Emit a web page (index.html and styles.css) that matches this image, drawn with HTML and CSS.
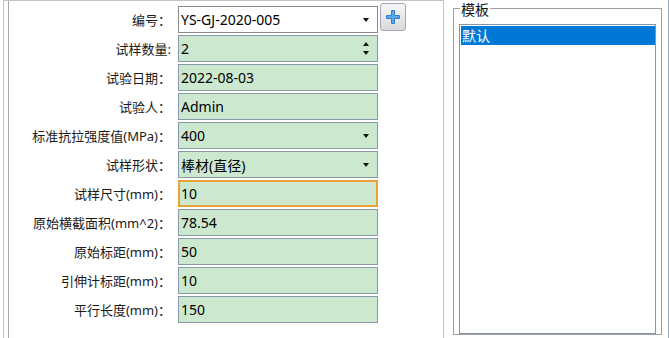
FILE: index.html
```html
<!DOCTYPE html>
<html lang="zh-CN">
<head>
    <meta charset="UTF-8">
    <meta name="viewport" content="width=device-width, initial-scale=1.0">
    <title>试样信息</title>
    <link rel="stylesheet" href="styles.css">
</head>
<body>
    <div class="window">
        <div class="left-panel">
            <div class="form-group">
                <div class="form">
                    <label class="label">编号：</label>
                    <div class="field combo plain"><span>YS-GJ-2020-005</span><span class="arrow-down"></span></div>
                    <button class="add-btn" title="新增">
                        <svg width="14" height="14" viewBox="0 0 14 14">
                            <path d="M5.5 0.5h3v5h5v3h-5v5h-3v-5h-5v-3h5z" fill="#5aa8ea" stroke="#2f7fcc" stroke-width="1"/>
                        </svg>
                    </button>

                    <label class="label">试样数量:</label>
                    <div class="field spin"><span>2</span><span class="spinner"><i class="arrow-up"></i><i class="arrow-down"></i></span></div>

                    <label class="label">试验日期：</label>
                    <div class="field"><span>2022-08-03</span></div>

                    <label class="label">试验人：</label>
                    <div class="field"><span>Admin</span></div>

                    <label class="label">标准抗拉强度值(MPa)：</label>
                    <div class="field combo"><span>400</span><span class="arrow-down"></span></div>

                    <label class="label">试样形状：</label>
                    <div class="field combo"><span>棒材(直径)</span><span class="arrow-down"></span></div>

                    <label class="label">试样尺寸(mm)：</label>
                    <div class="field focused"><span>10</span></div>

                    <label class="label">原始横截面积(mm^2)：</label>
                    <div class="field"><span>78.54</span></div>

                    <label class="label">原始标距(mm)：</label>
                    <div class="field"><span>50</span></div>

                    <label class="label">引伸计标距(mm)：</label>
                    <div class="field"><span>10</span></div>

                    <label class="label">平行长度(mm)：</label>
                    <div class="field"><span>150</span></div>
                </div>
            </div>
        </div>
        <div class="right-panel">
            <fieldset class="template-box">
                <legend>模板</legend>
                <ul class="listbox">
                    <li class="selected">默认</li>
                </ul>
            </fieldset>
        </div>
    </div>
</body>
</html>
```

FILE: styles.css
```css
body {
    margin: 0;
    padding: 0;
    background: #fff;
    font-family: "Noto Sans", "Noto Sans CJK SC", sans-serif;
    font-size: 13px;
    color: #000;
}
.window {
    display: flex;
    height: 338px;
    overflow: hidden;
}
.left-panel {
    margin-left: 3px;
    width: 439px;
    border: 1px solid #c4c4c4;
    border-bottom: none;
    display: flex;
}
.form-group {
    flex: 1;
    margin-left: 4px;
    border-left: 1px solid #a8a8a8;
}
.form {
    display: grid;
    grid-template-columns: 167px 200px 26px;
    grid-auto-rows: 27px;
    column-gap: 2px;
    row-gap: 2px;
    padding-top: 5px;
}
.label {
    grid-column: 1;
    display: flex;
    align-items: center;
    justify-content: flex-end;
    padding-right: 5px;
    color: #1a1a1a;
    white-space: nowrap;
}
.field {
    grid-column: 2;
    box-sizing: border-box;
    display: flex;
    align-items: center;
    justify-content: space-between;
    padding: 0 8px 0 2px;
    font-size: 14px;
    background: #cce8cf;
    border: 1px solid #8798a9;
}
.field.plain {
    background: #fff;
    border-color: #8a8a8a;
}
.field.focused {
    border: 2px solid #e8a238;
    padding-left: 1px;
}
.arrow-down {
    display: block;
    width: 0;
    height: 0;
    border-left: 3.5px solid transparent;
    border-right: 3.5px solid transparent;
    border-top: 4px solid #111;
}
.arrow-up {
    display: block;
    width: 0;
    height: 0;
    border-left: 3.5px solid transparent;
    border-right: 3.5px solid transparent;
    border-bottom: 4px solid #111;
}
.spinner {
    display: flex;
    flex-direction: column;
    gap: 5px;
}
.add-btn {
    grid-column: 3;
    grid-row: 1;
    align-self: start;
    margin-top: -3px;
    width: 26px;
    height: 28px;
    padding: 0;
    display: flex;
    align-items: center;
    justify-content: center;
    border: 1px solid #9fa8b4;
    border-radius: 3px;
    background: linear-gradient(#f6f6f6, #dadada);
    cursor: pointer;
}
.right-panel {
    padding-left: 9px;
    padding-right: 6px;
    border-right: 1px solid #9aa8b8;
}
.template-box {
    width: 209px;
    box-sizing: border-box;
    margin: -2px 0 0 0;
    padding: 6px 5px 0 5px;
    border: 1px solid #a0a0a0;
    min-width: 0;
}
.template-box legend {
    padding: 4px 1px 0 1px;
    margin-left: 1px;
    line-height: 16px;
    font-size: 14px;
    color: #111;
}
.listbox {
    list-style: none;
    margin: 0;
    padding: 1px 0 0 1px;
    height: 310px;
    box-sizing: border-box;
    border: 1px solid #8596a8;
    background: #fff;
}
.listbox li {
    height: 19px;
    line-height: 19px;
    padding-left: 1px;
    font-size: 14px;
}
.listbox li.selected {
    background: #0078d7;
    color: #fff;
}
```
